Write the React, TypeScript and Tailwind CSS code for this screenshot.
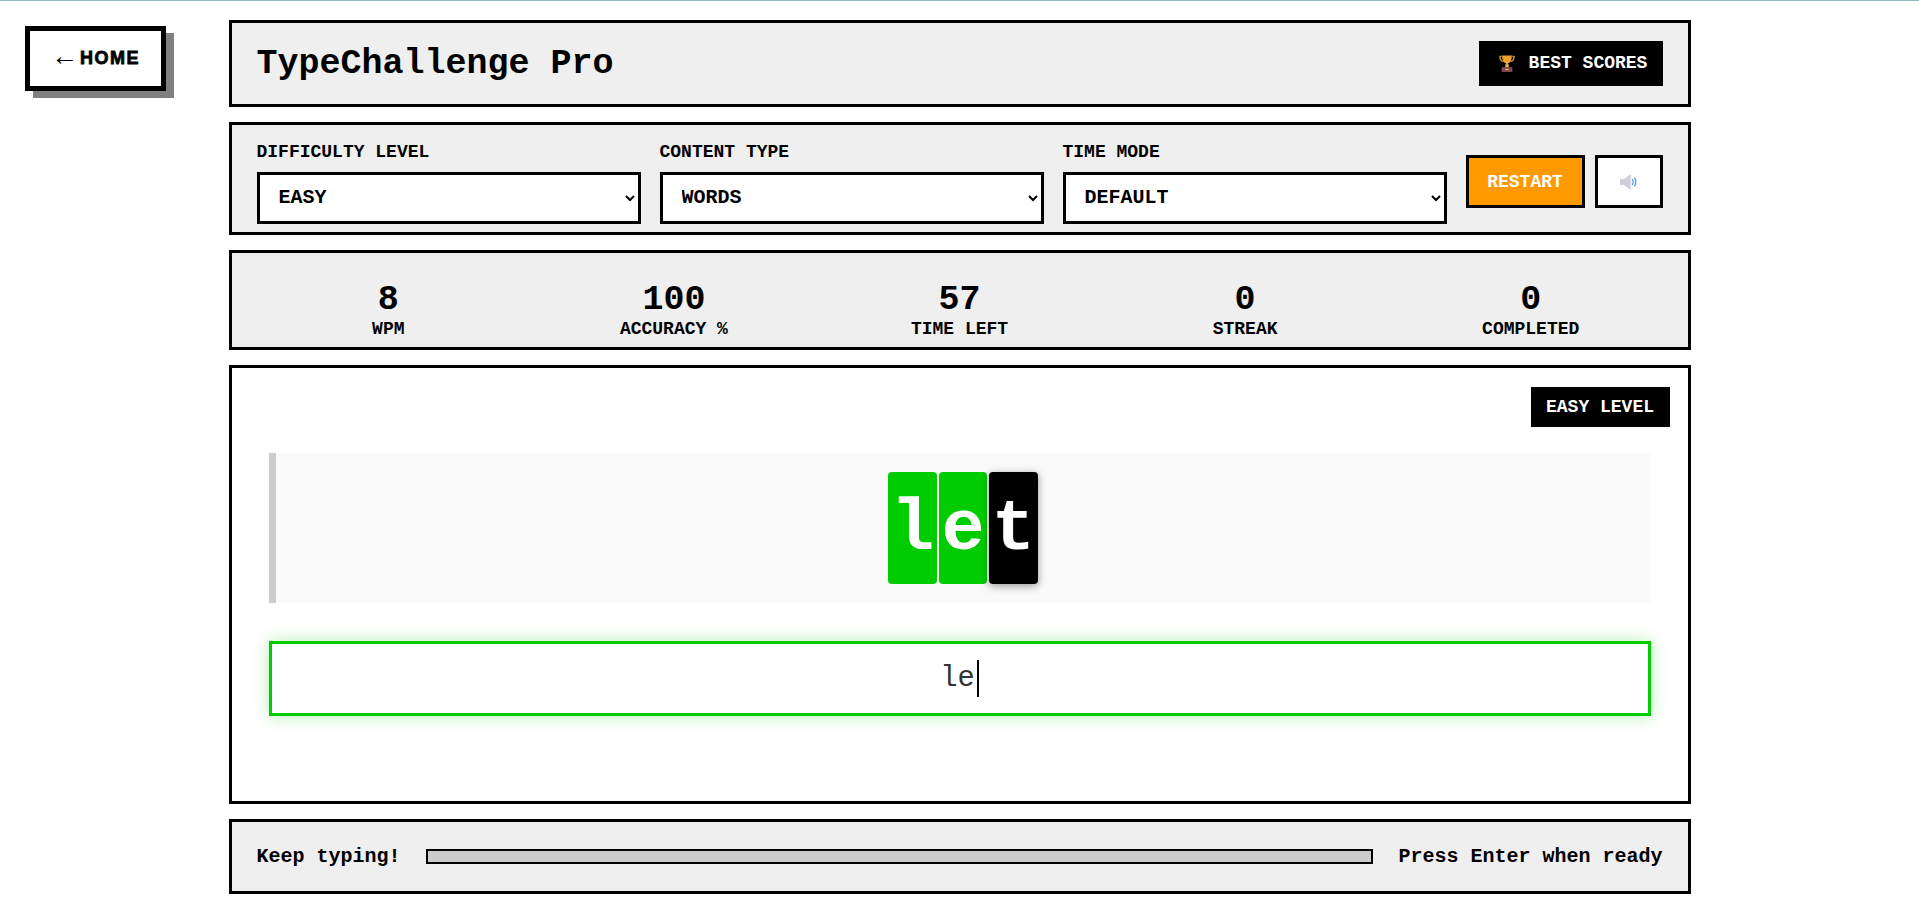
import React from 'react';

const mono = "font-['Liberation_Mono','Courier_New',monospace]";

const Trophy = () => (
  <svg width="16" height="19" viewBox="0 0 18 20" className="shrink-0">
    <path d="M3 2H1c0 3 1 5 4 6M15 2h2c0 3-1 5-4 6" fill="none" stroke="#d9962c" strokeWidth="1.5" />
    <path d="M3.5 1h11c0 5-1.5 8-4.5 9v2H8v-2C5 9 3.5 6 3.5 1z" fill="#f0a030" />
    <rect x="7" y="11" width="4" height="3" fill="#e8b040" />
    <rect x="3" y="14" width="12" height="5.5" fill="#7c4a5a" />
    <rect x="7" y="16" width="4" height="1.5" fill="#e8b040" />
  </svg>
);

const Speaker = () => (
  <svg width="18" height="16" viewBox="0 0 18 16">
    <path d="M0 5h4l6-4.5v15L4 11H0z" fill="#cfcdd8" />
    <path d="M10 .5h1.5v15H10z" fill="#e4e3ea" />
    <path d="M12.5 5c1 2 1 4 0 6M14.5 3.5c1.7 3 1.7 6 0 9" fill="none" stroke="#4a9df0" strokeWidth="1.3" />
  </svg>
);

const Control = ({ label, value, options }: { label: string; value: string; options: string[] }) => (
  <div className="flex-1 min-w-0">
    <label className="block mb-[9px] text-[18px] leading-[21px] font-bold text-black">{label}</label>
    <select
      defaultValue={value}
      className="w-full h-[52px] border-[3px] border-black bg-white pl-[15px] pr-1 text-[20px] font-bold text-black"
    >
      {options.map((o) => (
        <option key={o}>{o}</option>
      ))}
    </select>
  </div>
);

const Stat = ({ value, label }: { value: string; label: string }) => (
  <div className="text-center">
    <div className="text-[35px] leading-[36px] font-bold text-black">{value}</div>
    <div className="mt-[2px] text-[18px] leading-[18px] font-bold text-black">{label}</div>
  </div>
);

const Tile = ({ ch, current }: { ch: string; current?: boolean }) => (
  <span
    className={`mx-px flex h-[112px] w-[48.4px] items-center justify-center rounded-[4px] pt-[4px] text-[72px] font-bold text-white ${
      current ? 'bg-black shadow-[0_2px_8px_rgba(0,0,0,0.4)]' : 'bg-[#00cc00]'
    }`}
  >
    {ch}
  </span>
);

export default function App() {
  return (
    <div className={`${mono} relative min-h-[908px] bg-white`}>
      <div className="h-px bg-[#8fb9bd]" />

      <a
        href="#"
        className="absolute left-[25px] top-[26px] flex h-[65px] w-[141px] items-center justify-center border-[5px] border-black bg-white text-black no-underline shadow-[8px_7px_0_#808080] font-['Liberation_Sans',Arial,sans-serif]"
      >
        <span className="-translate-y-[2px] text-[27px] leading-none font-normal">←</span>
        <span className="ml-[2px] text-[18px] font-bold tracking-[1.5px] [-webkit-text-stroke:0.8px_black]">HOME</span>
      </a>

      <div className="mx-auto flex w-[1462px] flex-col gap-[15px] pt-[19px]">
        <header className="flex h-[87px] items-center justify-between border-[3px] border-black bg-[#efefef] pl-[25px] pr-[25px]">
          <h1 className="pt-[2px] text-[35px] font-bold text-black">TypeChallenge Pro</h1>
          <button className="flex h-[45px] w-[184px] items-center justify-center gap-[14px] bg-black pl-[5px] text-[18px] font-bold text-white">
            <Trophy />
            BEST SCORES
          </button>
        </header>

        <section className="flex h-[113px] items-center gap-[19px] border-[3px] border-black bg-[#efefef] px-[25px] pt-[8px]">
          <Control label="DIFFICULTY LEVEL" value="EASY" options={['EASY', 'MEDIUM', 'HARD']} />
          <Control label="CONTENT TYPE" value="WORDS" options={['WORDS', 'SENTENCES', 'CODE']} />
          <Control label="TIME MODE" value="DEFAULT" options={['DEFAULT', '30 SECONDS', '60 SECONDS']} />
          <button className="-mt-[2px] h-[53px] w-[119px] border-[3px] border-black bg-[#ff9900] pt-[1px] text-[18px] font-bold text-white">
            RESTART
          </button>
          <button className="-ml-[9px] -mt-[2px] flex h-[53px] w-[68px] items-center justify-center border-[3px] border-black bg-white pt-[1px]">
            <Speaker />
          </button>
        </section>

        <section className="grid h-[100px] grid-cols-5 items-center border-[3px] border-black bg-[#efefef] px-[14px] pt-[20px]">
          <Stat value="8" label="WPM" />
          <Stat value="100" label="ACCURACY %" />
          <Stat value="57" label="TIME LEFT" />
          <Stat value="0" label="STREAK" />
          <Stat value="0" label="COMPLETED" />
        </section>

        <main className="relative h-[439px] border-[3px] border-black bg-white px-[37px] pt-[85px]">
          <span className="absolute right-[18px] top-[19px] flex h-[40px] w-[139px] items-center justify-center bg-black text-[18px] font-bold text-white">
            EASY LEVEL
          </span>
          <div className="flex h-[150px] items-center justify-center border-l-[7px] border-[#cccccc] bg-[#fafafa]">
            <Tile ch="l" />
            <Tile ch="e" />
            <Tile ch="t" current />
          </div>
          <div className="mt-[38px] flex h-[75px] items-center justify-center border-[3px] border-[#00cc00] bg-white text-[28.8px] text-[#333333] shadow-[0_0_15px_rgba(0,204,0,0.3)]">
            le
            <span className="ml-[2px] h-[37px] w-[2px] bg-black" />
          </div>
        </main>

        <footer className="flex h-[75px] items-center gap-[25px] border-[3px] border-black bg-[#efefef] px-[25px] text-[20px] font-bold text-black">
          <span>Keep typing!</span>
          <div className="h-[15px] flex-1 border-2 border-black bg-[#cccccc]" />
          <span>Press Enter when ready</span>
        </footer>
      </div>
    </div>
  );
}
